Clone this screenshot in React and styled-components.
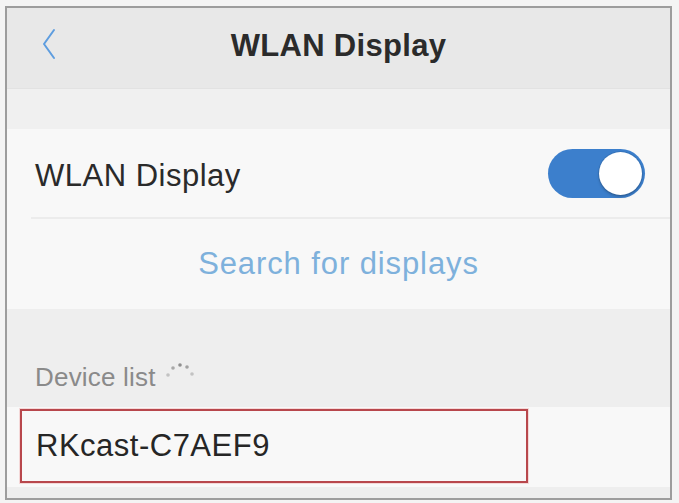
import React from 'react';
import styled, { createGlobalStyle } from 'styled-components';

const GlobalStyle = createGlobalStyle`
  html, body {
    margin: 0;
    padding: 0;
    background: #ffffff;
  }
  body {
    font-family: "Liberation Sans", Arial, sans-serif;
    -webkit-font-smoothing: antialiased;
  }
  * {
    box-sizing: border-box;
  }
`;

const Page = styled.div`
  width: 679px;
  height: 503px;
  padding: 6px 7px 3px 5px;
  background: #f4f4f4;
`;

const Screen = styled.div`
  height: 100%;
  border: 2px solid #9d9d9d;
  display: flex;
  flex-direction: column;
  overflow: hidden;
  background: #eeeeee;
`;

const NavBar = styled.div`
  height: 81px;
  flex-shrink: 0;
  display: grid;
  grid-template-columns: 1fr auto 1fr;
  align-items: center;
  background: #e8e8e8;
  border-bottom: 1px solid #e2e2e2;
`;

const BackButton = styled.button`
  justify-self: start;
  margin: 0 0 8px 35px;
  padding: 0;
  border: none;
  background: none;
  display: flex;
  align-items: center;
  color: #5e9ddf;
`;

const Title = styled.h1`
  margin: 0 0 4px;
  font-size: 31px;
  font-weight: 700;
  color: #2b2b2b;
  letter-spacing: 0.3px;
`;

const Band = styled.div`
  height: ${(p) => p.$height}px;
  flex-shrink: 0;
  background: ${(p) => p.$bg};
`;

const Group = styled.div`
  background: #f8f8f8;
  flex-shrink: 0;
`;

const SwitchRow = styled.div`
  height: 88px;
  display: flex;
  align-items: center;
  justify-content: space-between;
  padding: 0 25px 0 28px;
`;

const RowLabel = styled.span`
  margin-top: 6px;
  font-size: 31px;
  color: #2a2a2a;
  letter-spacing: 0.5px;
`;

const Divider = styled.div`
  height: 2px;
  margin-left: 24px;
  background: #ececec;
`;

const SearchRow = styled.div`
  height: 90px;
  display: flex;
  align-items: center;
  justify-content: center;
`;

const SearchLink = styled.span`
  font-size: 31px;
  color: #7eb1dc;
  letter-spacing: 0.9px;
`;

const Toggle = styled.div`
  width: 97px;
  height: 49px;
  border-radius: 25px;
  background: #3c7fcc;
  padding: 3px;
  display: flex;
  justify-content: flex-end;
`;

const Knob = styled.div`
  width: 43px;
  height: 43px;
  border-radius: 50%;
  background: #ffffff;
  box-shadow: 0 0 0 1px rgba(0, 0, 0, 0.08), 0 2px 3px rgba(0, 0, 0, 0.2);
`;

const SectionHeader = styled.div`
  height: 98px;
  display: flex;
  align-items: flex-end;
  gap: 8px;
  padding: 0 0 14px 28px;
`;

const SectionLabel = styled.span`
  font-size: 26px;
  color: #8a8a8a;
  letter-spacing: 0.2px;
`;

const DeviceRow = styled.div`
  height: 80px;
  background: #f8f8f8;
  padding: 2px 0 0 13px;
`;

const DeviceBox = styled.div`
  width: 508px;
  height: 74px;
  border: 2px solid #b8474c;
  box-shadow: 0 0 0 1px rgba(230, 120, 120, 0.25);
  display: flex;
  align-items: center;
  padding-left: 14px;
`;

const DeviceName = styled.span`
  font-size: 31px;
  color: #262626;
  letter-spacing: 0.5px;
`;

function ChevronLeft() {
  return (
    <svg width="14" height="32" viewBox="0 0 14 32" fill="none">
      <path
        d="M12 2 L2 16 L12 30"
        stroke="currentColor"
        strokeWidth="2"
        strokeLinecap="round"
        strokeLinejoin="round"
      />
    </svg>
  );
}

// activity indicator caught mid-spin: only a few spokes are visible
function Spinner() {
  const dots = [
    { x: 4, y: 14, o: 0.35 },
    { x: 9, y: 7, o: 0.55 },
    { x: 16, y: 4, o: 0.75 },
    { x: 23, y: 6, o: 0.6 },
    { x: 28, y: 13, o: 0.35 },
  ];
  return (
    <svg width="32" height="20" viewBox="0 0 32 20" style={{ marginBottom: 12 }}>
      {dots.map((d, i) => (
        <circle key={i} cx={d.x} cy={d.y} r="1.8" fill="#6f6f6f" opacity={d.o} />
      ))}
    </svg>
  );
}

export default function App() {
  return (
    <Page>
      <GlobalStyle />
      <Screen>
        <NavBar>
          <BackButton aria-label="Back">
            <ChevronLeft />
          </BackButton>
          <Title>WLAN Display</Title>
          <span />
        </NavBar>

        <Band $height={40} $bg="#f0f0f0" />

        <Group>
          <SwitchRow>
            <RowLabel>WLAN Display</RowLabel>
            <Toggle>
              <Knob />
            </Toggle>
          </SwitchRow>
          <Divider />
          <SearchRow>
            <SearchLink>Search for displays</SearchLink>
          </SearchRow>
        </Group>

        <SectionHeader>
          <SectionLabel>Device list</SectionLabel>
          <Spinner />
        </SectionHeader>

        <DeviceRow>
          <DeviceBox>
            <DeviceName>RKcast-C7AEF9</DeviceName>
          </DeviceBox>
        </DeviceRow>
      </Screen>
    </Page>
  );
}
